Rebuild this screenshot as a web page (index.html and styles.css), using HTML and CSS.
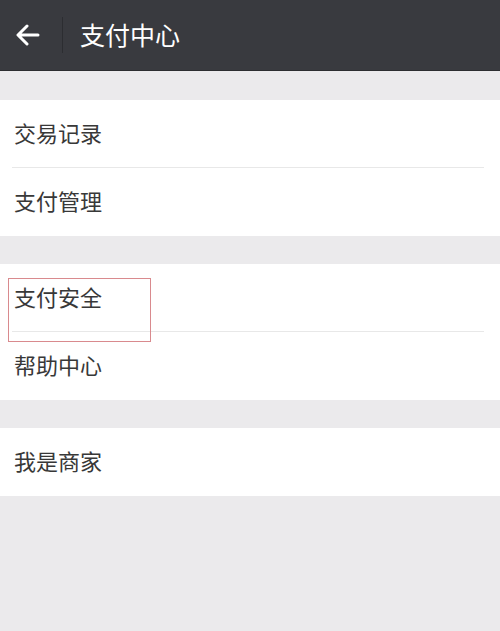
FILE: index.html
```html
<!DOCTYPE html>
<html lang="zh">
<head>
<meta charset="utf-8">
<link rel="stylesheet" href="styles.css">
</head>
<body>
<header class="bar">
  <div class="back">
    <svg width="24" height="22" viewBox="0 0 24 22"><path d="M22 11H3M11 2L2 11l9 9" fill="none" stroke="#fff" stroke-width="3" stroke-linecap="round" stroke-linejoin="round"/></svg>
  </div>
  <div class="divider"></div>
  <div class="title">支付中心</div>
</header>
<main>
  <section class="group">
    <div class="row">交易记录</div>
    <div class="row">支付管理</div>
  </section>
  <section class="group">
    <div class="row"><span class="mark"></span>支付安全</div>
    <div class="row">帮助中心</div>
  </section>
  <section class="group">
    <div class="row">我是商家</div>
  </section>
</main>
</body>
</html>
```
FILE: styles.css
```css
html, body { margin: 0; padding: 0; }
body {
  width: 500px;
  height: 631px;
  background: #ebeaec;
  font-family: "Noto Sans CJK SC", "Noto Sans", sans-serif;
  overflow: hidden;
}
.bar {
  height: 71px;
  background: #393a3f;
  display: flex;
  align-items: center;
  box-sizing: border-box;
  border-bottom: 1px solid #2c2d31;
}
.back {
  width: 62px;
  display: flex;
  align-items: center;
  padding-left: 16px;
  box-sizing: border-box;
  height: 22px;
}
.divider {
  width: 1px;
  height: 36px;
  background: #2c2d31;
}
.title {
  color: #fff;
  font-size: 25px;
  margin-left: 17px;
  line-height: 1;
  margin-top: -1px;
}
main {
  display: flex;
  flex-direction: column;
  gap: 28px;
  padding-top: 29px;
}
.group {
  background: #fff;
  display: flex;
  flex-direction: column;
}
.row {
  position: relative;
  height: 68px;
  box-sizing: border-box;
  display: flex;
  align-items: center;
  padding-left: 14px;
  padding-bottom: 5px;
  font-size: 22px;
  color: #383838;
  line-height: 1;
}
.row + .row::before {
  content: "";
  position: absolute;
  top: -1px;
  left: 12px;
  right: 16px;
  height: 1px;
  background: #e8e8e8;
}
.mark {
  position: absolute;
  left: 8px;
  top: 14px;
  width: 143px;
  height: 64px;
  border: 1px solid #d98a8e;
  box-sizing: border-box;
  z-index: 2;
  pointer-events: none;
}
```
